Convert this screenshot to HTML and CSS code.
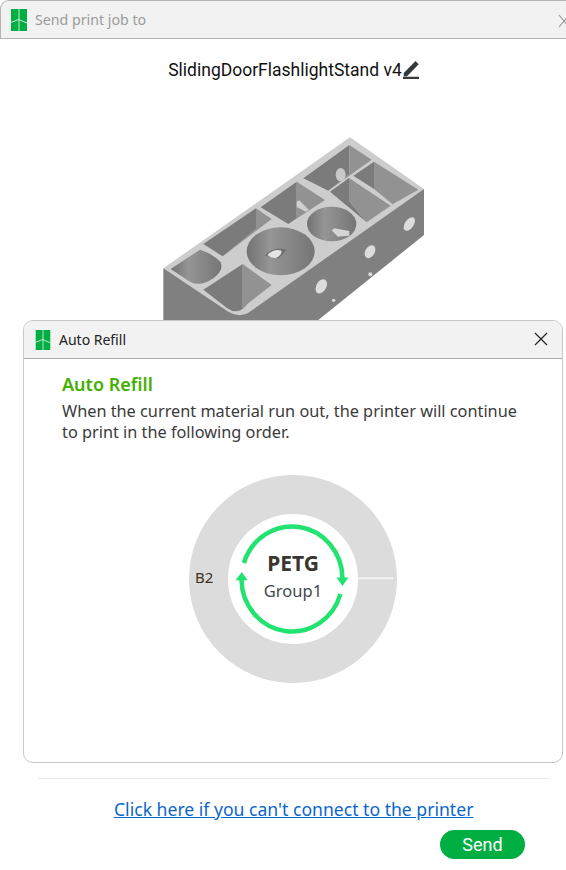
FILE: index.html
```html
<!DOCTYPE html>
<html lang="en">
<head>
<meta charset="utf-8">
<title>Send print job to</title>
<link rel="stylesheet" href="styles.css">
</head>
<body>
<div class="window">
  <header class="titlebar">
    <svg class="logo" viewBox="0 0 16 22"><path fill="#00ae42" d="M0 0h16v22H0z"/><path fill="none" stroke="#fff" stroke-width=".8" d="M8 0v22M0 13.500L7.500 10.500L16 14"/></svg>
    <span class="titlebar-text">Send print job to</span>
    <svg class="win-close" viewBox="0 0 12 14"><path fill="none" stroke="#999" stroke-width="1.100" d="M1 1l10 12M1 13L11 1"/></svg>
  </header>
  <div class="filename">
    <span>SlidingDoorFlashlightStand v4</span>
    <svg class="edit" viewBox="0 0 18 20"><path fill="#333a3e" d="M1.800 14L13.500 2l3.200 3.300L5 17.300H1.800zM1 17.800h16v2.400H1z"/></svg>
  </div>
  <svg class="model" viewBox="0 0 870 585">
    <defs>
      <linearGradient id="cyl" x1="0" x2="1" y1="0" y2="0">
        <stop offset="0" stop-color="#727272"/><stop offset=".35" stop-color="#959595"/><stop offset="1" stop-color="#757575"/>
      </linearGradient>
    </defs>
    <path fill="#808080" d="M40 418V585H490L822 318V180z"/>
    <path fill="#cdcdcd" d="M40 418L600 25L822 180L293 553Q265 566 235 548z"/>
    <path fill="#7b7b7b" d="M460 148L598 48V135L535 185z"/>
    <path fill="#929292" d="M598 48L665 92L535 185L598 135z"/>
    <path fill="#7b7b7b" d="M540 188L597 147V215L650 280z"/>
    <path fill="#929292" d="M597 147L722 230L650 280L597 215z"/>
    <path fill="#7b7b7b" d="M610 140L672 98V180z"/>
    <path fill="#929292" d="M672 98L805 182L728 226L672 180z"/>
    <path fill="#7b7b7b" d="M332 235L440 158V268L415 285z"/>
    <path fill="#929292" d="M440 158L525 213L415 285L440 268z"/>
    <path fill="#7b7b7b" d="M160 345L318 238V300L218 382z"/>
    <path fill="#929292" d="M318 238L365 270L218 382L318 300z"/>
    <path fill="#7b7b7b" d="M160 482L278 405V540Q255 555 232 538z"/>
    <path fill="#929292" d="M278 405L365 468L292 525Q285 535 278 540z"/>
    <path fill="url(#cyl)" d="M62 420L150 362Q190 375 212 400Q222 425 190 448Q150 475 120 458z"/>
    <ellipse cx="392" cy="367" rx="102" ry="72" fill="url(#cyl)"/>
    <ellipse cx="545" cy="285" rx="74" ry="52" fill="url(#cyl)"/>
    <path fill="#6a6a6a" d="M345 380Q370 352 408 362Q400 375 385 388z"/>
    <path fill="#e4e4e4" d="M352 378Q372 358 395 365Q395 378 380 386Q365 390 352 378z"/>
    <path fill="#d4d4d4" d="M545 304l8-6 45 8v14l-35 3z"/>
    <path fill="#cfcfcf" d="M440 218l8-4 28 28-8 6-28-14z"/>
    <ellipse cx="572" cy="137" rx="15" ry="20" fill="#c8c8c8"/>
    <ellipse cx="660" cy="368" rx="14" ry="21" transform="rotate(30 660 368)" fill="#dcdcdc"/>
    <ellipse cx="778" cy="285" rx="13" ry="23" transform="rotate(35 778 285)" fill="#dcdcdc"/>
    <ellipse cx="514" cy="472" rx="15" ry="23" transform="rotate(30 514 472)" fill="#dcdcdc"/>
    <circle cx="661" cy="436" r="6" fill="#dcdcdc"/>
    <circle cx="551" cy="514" r="5" fill="#dcdcdc"/>
  </svg>
  <footer class="footer">
    <div class="rule"></div>
    <a class="help" href="#">Click here if you can't connect to the printer</a>
    <div class="actions"><button class="send">Send</button></div>
  </footer>
</div>
<section class="dialog">
  <header class="dialog-bar">
    <svg class="logo small" viewBox="0 0 16 22"><path fill="#00ae42" d="M0 0h16v22H0z"/><path fill="none" stroke="#fff" stroke-width=".8" d="M8 0v22M0 13.500L7.500 10.500L16 14"/></svg>
    <span class="dialog-title">Auto Refill</span>
    <svg class="dialog-close" viewBox="0 0 14 14"><path fill="none" stroke="#222" stroke-width="1.200" d="M1 1l12 12M13 1L1 13"/></svg>
  </header>
  <div class="dialog-body">
    <h2 class="heading">Auto Refill</h2>
    <p class="desc">When the current material run out, the printer will continue to print in the following order.</p>
    <svg class="ring" viewBox="0 0 208 208">
      <circle cx="104" cy="104" r="84.500" fill="none" stroke="#dcdcdc" stroke-width="39"/>
      <path stroke="#f2f2f2" stroke-width="2" d="M169 103.300h35"/>
      <text class="ring-slot" x="6" y="108">B2</text>
      <g fill="none" stroke="#22e36f" stroke-width="4.500">
        <path d="M54.900 88A50.500 52.500 0 0 1 153.500 103"/>
        <path d="M151.400 119A50.500 52.500 0 0 1 52.500 105"/>
      </g>
      <path fill="#22e36f" d="M147.500 102.600h12l-6 8.400zM46.500 105.300h12.300l-6-8.300z"/>
      <text class="ring-material" x="104" y="96">PETG</text>
      <text class="ring-group" x="104" y="122">Group1</text>
    </svg>
  </div>
</section>
</body>
</html>
```
FILE: styles.css
```css
* { box-sizing: border-box; }
html, body { margin: 0; height: 100%; }
body { width: 566px; height: 870px; overflow: hidden; background: #fff; position: relative; font-family: "Noto Sans", sans-serif; }
.window { display: flex; flex-direction: column; height: 870px; }
.titlebar { height: 39px; flex: none; display: flex; align-items: center; padding-left: 10px; background: #f2f2f2; border: 1px solid #b3b3b3; border-width: 1px 0 1px 1px; border-top-left-radius: 9px; position: relative; }
.logo { width: 16px; height: 22px; flex: none; }
.logo.small { width: 16px; height: 20px; }
.titlebar-text { margin-left: 8px; font-size: 14.200px; color: #9b9b9b; }
.win-close { position: absolute; right: -4px; top: 13px; width: 12px; height: 14px; }
.filename { height: 39px; display: flex; justify-content: center; align-items: center; margin-top: 11px; padding-left: 22px; font-family: Roboto, sans-serif; font-size: 17.500px; color: #111; }
.edit { width: 18px; height: 20px; margin-top: -2px; }
.model { width: 290px; height: 195px; margin: 40px 0 0 150px; flex: none; }
.footer { margin-top: auto; display: flex; flex-direction: column; }
.rule { height: 1px; margin: 0 17px 0 38px; background: #e8e8e8; }
.help { align-self: flex-start; margin: 18px 0 0 114px; font-size: 17.600px; line-height: 24px; color: #0a66cc; }
.actions { display: flex; justify-content: flex-end; padding: 9px 41px 11px 0; }
.send { width: 85px; height: 29px; border: 0; border-radius: 15px; background: #00ae42; color: #fff; font-family: Roboto, sans-serif; font-size: 18px; padding: 0; }
.dialog { position: absolute; left: 23px; top: 320px; width: 540px; height: 443px; background: #fff; border: 1px solid #c8c8c8; border-radius: 10px; overflow: hidden; }
.dialog-bar { height: 38px; background: #f2f2f2; border-bottom: 1px solid #ababab; display: flex; align-items: center; padding-left: 11px; position: relative; }
.dialog-title { margin-left: 8px; font-size: 14px; color: #222; }
.dialog-close { position: absolute; right: 14px; top: 11px; width: 14px; height: 14px; }
.dialog-body { display: flex; flex-direction: column; padding: 14px 38px 0; }
.heading { margin: 0; font-size: 18px; line-height: 22px; font-weight: 600; color: #43b000; }
.desc { margin: 6px 0 0; font-size: 16.300px; line-height: 21px; color: #3a3a3a; }
.ring { width: 208px; height: 208px; margin: 32px 0 0 127px; flex: none; }
.ring-slot { font-size: 15px; fill: #3c3020; }
.ring-material { font-size: 21px; font-weight: 700; fill: #3a3530; text-anchor: middle; }
.ring-group { font-size: 16.500px; fill: #40474d; text-anchor: middle; }
```
